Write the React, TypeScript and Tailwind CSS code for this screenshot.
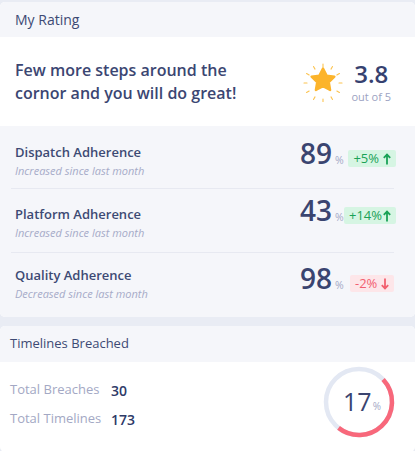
import React from 'react';

interface Adherence {
  title: string;
  note: string;
  value: number;
  change: string;
  up: boolean;
  rowClass: string;
  leftClass: string;
  rightClass: string;
  arrowClass: string;
}

const rows: Adherence[] = [
  {
    title: 'Dispatch Adherence',
    note: 'Increased since last month',
    value: 89,
    change: '+5%',
    up: true,
    rowClass: 'h-[62px]',
    leftClass: 'pt-[17px]',
    rightClass: 'pt-[11px]',
    arrowClass: 'ml-[4px]',
  },
  {
    title: 'Platform Adherence',
    note: 'Increased since last month',
    value: 43,
    change: '+14%',
    up: true,
    rowClass: 'h-[63px]',
    leftClass: 'pt-[16px]',
    rightClass: 'pt-[5px]',
    arrowClass: 'ml-[1px]',
  },
  {
    title: 'Quality Adherence',
    note: 'Decreased since last month',
    value: 98,
    change: '-2%',
    up: false,
    rowClass: 'h-[64px]',
    leftClass: 'pt-[13px]',
    rightClass: 'pt-[9px]',
    arrowClass: 'ml-[4px]',
  },
];

function StarIcon() {
  const rays = Array.from({ length: 12 }, (_, i) => i * 30);
  return (
    <svg width="40" height="40" viewBox="0 0 40 40">
      {rays.map((a) => {
        const r = (a * Math.PI) / 180;
        return (
          <line
            key={a}
            x1={20 + Math.sin(r) * 16}
            y1={21 - Math.cos(r) * 16}
            x2={20 + Math.sin(r) * 19}
            y2={21 - Math.cos(r) * 19}
            stroke="#fcc451"
            strokeWidth="1.1"
            strokeLinecap="round"
          />
        );
      })}
      <path
        d="M20 6.5 L23.6 13.6 L31.4 14.7 L25.8 20.2 L27.1 28 L20 24.3 L12.9 28 L14.2 20.2 L8.6 14.7 L16.4 13.6 Z"
        fill="#fcb42b"
        stroke="#fcb42b"
        strokeWidth="2.4"
        strokeLinejoin="round"
      />
    </svg>
  );
}

function Arrow({ up, className }: { up: boolean; className: string }) {
  return (
    <svg width="8" height="12" viewBox="0 0 8 12" className={className}>
      {up ? (
        <path d="M4 11.5V1.5 M0.8 4.8 L4 1.5 L7.2 4.8" stroke="currentColor" strokeWidth="1.8" fill="none" />
      ) : (
        <path d="M4 0.5V10.5 M0.8 7.2 L4 10.5 L7.2 7.2" stroke="currentColor" strokeWidth="1.8" fill="none" />
      )}
    </svg>
  );
}

function Ring() {
  const c = 2 * Math.PI * 33;
  return (
    <svg width="72" height="72" viewBox="0 0 72 72">
      <circle cx="36" cy="36" r="33" fill="none" stroke="#e3e8f3" strokeWidth="4.5" />
      <circle
        cx="36"
        cy="36"
        r="33"
        fill="none"
        stroke="#f8687b"
        strokeWidth="4.5"
        strokeDasharray={`${c * 0.475} ${c}`}
        transform="rotate(-43 36 36)"
      />
    </svg>
  );
}

export default function App() {
  return (
    <div className="min-h-screen bg-[#e9ecf4] pt-[2px] font-['Open_Sans',sans-serif]">
      <div className="rounded-[5px] overflow-hidden bg-white">
        <div className="h-[35px] bg-[#f5f6fa] px-[15px] flex items-center text-[14px] font-medium text-[#3d4a74]">
          My Rating
        </div>

        <div className="h-[89px] flex items-center justify-between pl-[15px] pr-[24px]">
          <div className="text-[16px] leading-[23px] font-semibold text-[#3b4672]">
            Few more steps around the
            <br />
            cornor and you will do great!
          </div>
          <div className="flex items-center">
            <StarIcon />
            <div className="ml-[8px] flex flex-col items-center">
              <div className="text-[24px] leading-[30px] font-semibold text-[#364170]">3.8</div>
              <div className="text-[11px] leading-[16px] text-[#9ca2c2]">out of 5</div>
            </div>
          </div>
        </div>

        <div className="bg-[#f5f6fa]">
          {rows.map((row, i) => (
            <div key={row.title}>
              <div className={`flex items-start justify-between pl-[15px] pr-[19px] ${row.rowClass}`}>
                <div className={`flex flex-col ${row.leftClass}`}>
                  <div className="text-[13px] leading-[19px] font-semibold text-[#3d4a74]">{row.title}</div>
                  <div className="text-[11px] leading-[17px] italic text-[#a6abc8]">{row.note}</div>
                </div>
                <div className={`w-[96px] flex items-start ${row.rightClass}`}>
                  <div className="w-[50px] flex items-baseline">
                    <span className="text-[28px] leading-[32px] font-semibold text-[#3a4470]">{row.value}</span>
                    <span className="ml-[3px] text-[10.5px] text-[#a4a9c6]">%</span>
                  </div>
                  <div
                    className={
                      row.up
                        ? 'mt-[13px] h-[17px] px-[5px] flex items-center rounded-[2px] bg-[#d6f5e3] text-[13px] text-[#1aa257]'
                        : 'mt-[13px] h-[17px] px-[5px] flex items-center rounded-[2px] bg-[#fde6e9] text-[13px] text-[#f2606f]'
                    }
                  >
                    {row.change}
                    <Arrow up={row.up} className={row.arrowClass} />
                  </div>
                </div>
              </div>
              {i < rows.length - 1 && <div className="ml-[11px] mr-[21px] h-px bg-[#e7e9f1]" />}
            </div>
          ))}
        </div>
      </div>

      <div className="mt-[9px] rounded-[5px] overflow-hidden bg-white">
        <div className="h-[36px] bg-[#f5f6fa] px-[10px] flex items-center text-[13px] font-medium text-[#3d4a74]">
          Timelines Breached
        </div>
        <div className="h-[90px] flex justify-between pl-[10px] pr-[20px]">
          <div className="pt-[18px] flex flex-col gap-[9px]">
            <div className="flex items-center h-[20px]">
              <span className="w-[101px] text-[13px] text-[#a3a8c4]">Total Breaches</span>
              <span className="text-[14px] font-semibold text-[#2e3a68]">30</span>
            </div>
            <div className="flex items-center h-[20px]">
              <span className="w-[101px] text-[13px] text-[#a3a8c4]">Total Timelines</span>
              <span className="text-[14px] font-semibold text-[#2e3a68]">173</span>
            </div>
          </div>
          <div className="pt-[4px]">
            <div className="relative w-[72px] h-[72px]">
              <Ring />
              <div className="absolute inset-0 flex items-center justify-center pl-[6px]">
                <span className="text-[25px] font-medium text-[#3a4470]">17</span>
                <span className="ml-[1px] mt-[8px] text-[10px] text-[#a4a9c6]">%</span>
              </div>
            </div>
          </div>
        </div>
      </div>
    </div>
  );
}
